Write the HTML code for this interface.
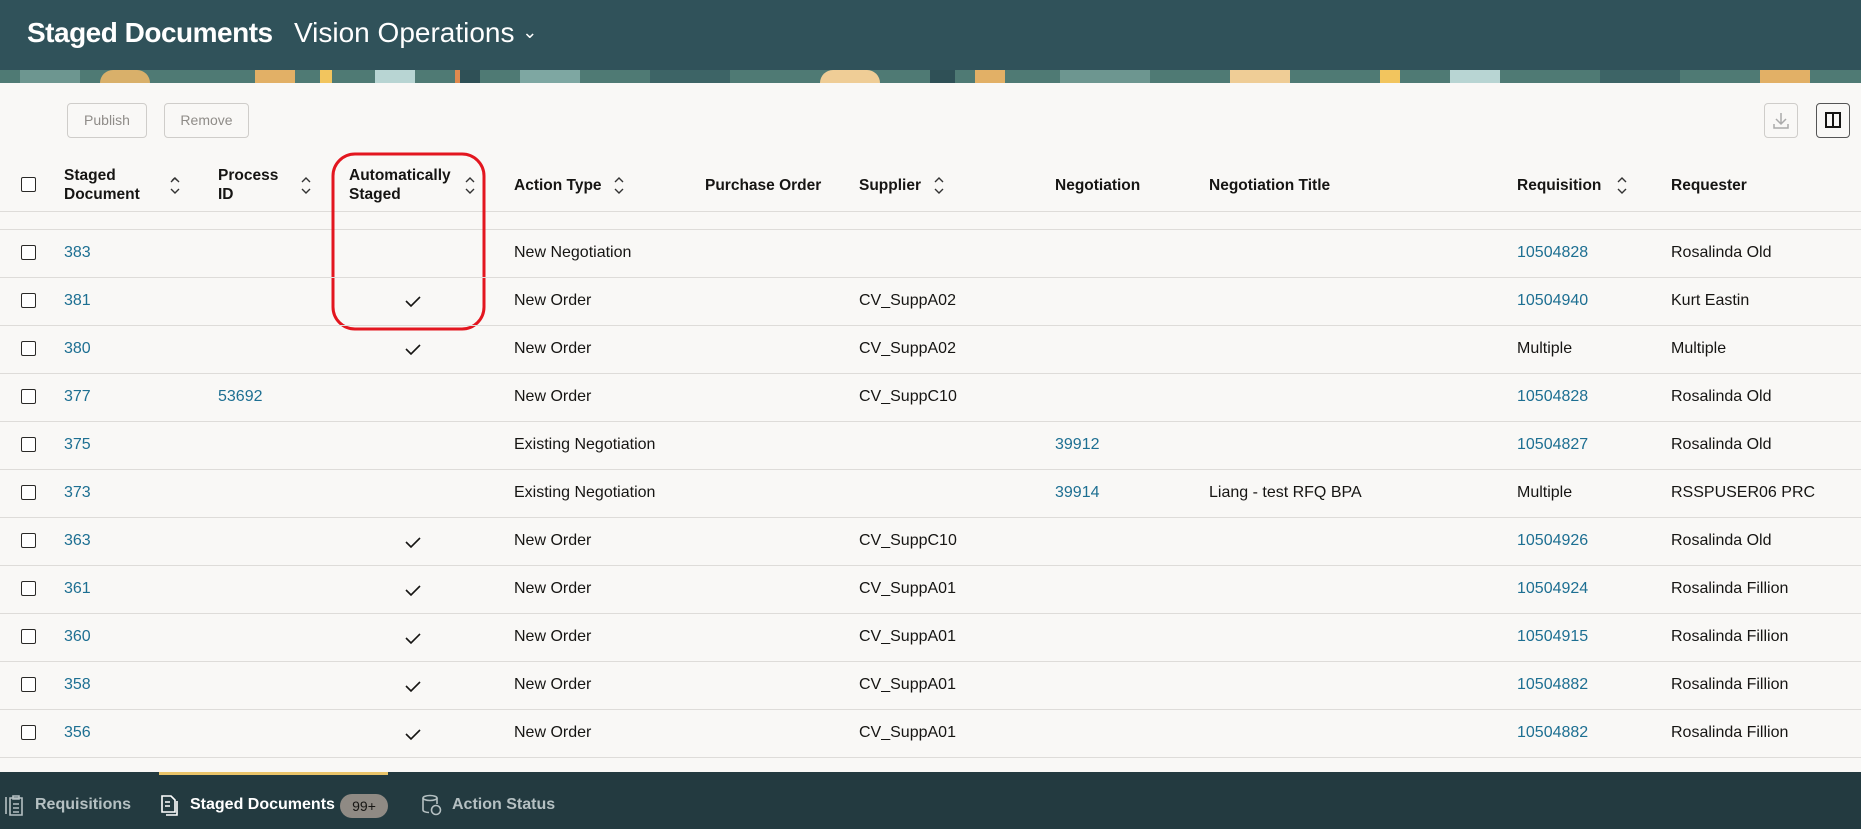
<!DOCTYPE html>
<html><head><meta charset="utf-8"><style>
*{box-sizing:border-box;margin:0;padding:0}
body{width:1861px;height:829px;overflow:hidden;background:#f9f8f6;font-family:"Liberation Sans",sans-serif;color:#161513;position:relative}
.hdr{position:absolute;left:0;top:0;width:1861px;height:70px;background:#30525a}
.strip{position:absolute;left:0;top:70px;width:1861px;height:13px;background:#4f7a74;overflow:hidden}
.strip i{position:absolute;top:0;height:13px;display:block}
.title{position:absolute;left:27px;top:17px;color:#fff;font-size:28px;font-weight:bold;letter-spacing:-0.5px}
.sub{position:absolute;left:294px;top:17px;color:#fff;font-size:28px}
.btn{position:absolute;top:103px;height:35px;border:1px solid #cfcdca;border-radius:4px;color:#8f8c88;font-size:14px;line-height:33px;text-align:center}
.ib{position:absolute;top:103px;width:34px;height:35px;border:1px solid #cfcdca;border-radius:4px}
.h{position:absolute;font-size:15.5px;font-weight:bold;line-height:19px}
.s{position:absolute;font-size:13px;color:#333}
.line{position:absolute;left:0;width:1861px;height:1px;background:#dedcd9}
.cb{position:absolute;left:21px;width:15px;height:15px;border:1.5px solid #2a2927;border-radius:2px;background:#fff}
.c{position:absolute;font-size:16px;white-space:nowrap}
.a{color:#1d6f92}
.ft{position:absolute;left:0;top:772px;width:1861px;height:57px;background:#233a40}
.ft span{position:absolute;top:24px;font-size:16px;font-weight:bold}
</style></head><body>
<div class="hdr"></div>
<div class="title">Staged Documents</div>
<div class="sub">Vision Operations <span style="font-size:18px;position:relative;top:-4px">&#8964;</span></div>
<div class="strip">
<i style="left:20px;width:60px;background:#6d9690"></i>
<i style="left:100px;width:50px;background:#d9b06a;border-radius:20px 20px 0 0"></i>
<i style="left:255px;width:40px;background:#e2b066"></i>
<i style="left:320px;width:12px;background:#f2c55e"></i>
<i style="left:375px;width:40px;background:#b8d5d3"></i>
<i style="left:455px;width:6px;background:#e08a4e"></i>
<i style="left:460px;width:20px;background:#2f5056"></i>
<i style="left:520px;width:60px;background:#7ea7a2"></i>
<i style="left:650px;width:80px;background:#3d6466"></i>
<i style="left:820px;width:60px;background:#efcd96;border-radius:20px 20px 0 0"></i>
<i style="left:930px;width:25px;background:#2f5056"></i>
<i style="left:975px;width:30px;background:#e2b066"></i>
<i style="left:1060px;width:90px;background:#6d9690"></i>
<i style="left:1230px;width:60px;background:#efcd96"></i>
<i style="left:1380px;width:20px;background:#f2c55e"></i>
<i style="left:1450px;width:50px;background:#b8d5d3"></i>
<i style="left:1600px;width:80px;background:#3d6466"></i>
<i style="left:1760px;width:50px;background:#e2b066"></i>
</div>
<div class="btn" style="left:67px;width:80px">Publish</div>
<div class="btn" style="left:164px;width:85px">Remove</div>
<div class="ib" style="left:1764px"><svg width="32" height="33" viewBox="0 0 32 33"><path d="M16 9v11M11 15l5 5 5-5M9 20v4h14v-4" stroke="#aaa" stroke-width="1.5" fill="none"/></svg></div>
<div class="ib" style="left:1816px;border-color:#555"><svg width="32" height="33" viewBox="0 0 32 33"><rect x="9" y="9" width="14" height="14" stroke="#161513" stroke-width="2" fill="none"/><path d="M16 9v14" stroke="#161513" stroke-width="2"/></svg></div>

<div class="cb" style="top:177px"></div>
<div class="h" style="left:64px;top:166px">Staged<br>Document</div><div class="s" style="left:169px;top:175px">&#8963;<br></div>
<div class="h" style="left:218px;top:166px">Process<br>ID</div>
<div class="h" style="left:349px;top:166px">Automatically<br>Staged</div>
<div class="h" style="left:514px;top:176px">Action Type</div>
<div class="h" style="left:705px;top:176px">Purchase Order</div>
<div class="h" style="left:859px;top:176px">Supplier</div>
<div class="h" style="left:1055px;top:176px">Negotiation</div>
<div class="h" style="left:1209px;top:176px">Negotiation Title</div>
<div class="h" style="left:1517px;top:176px">Requisition</div>
<div class="h" style="left:1671px;top:176px">Requester</div>
<svg style="position:absolute;left:0;top:0" width="1861" height="230">
<g stroke="#333" stroke-width="1.4" fill="none">
<path d="M171 182l4-4 4 4M171 189l4 4 4-4"/>
<path d="M302 182l4-4 4 4M302 189l4 4 4-4"/>
<path d="M466 182l4-4 4 4M466 189l4 4 4-4"/>
<path d="M615 182l4-4 4 4M615 189l4 4 4-4"/>
<path d="M935 182l4-4 4 4M935 189l4 4 4-4"/>
<path d="M1618 182l4-4 4 4M1618 189l4 4 4-4"/>
</g></svg>
<div class="line" style="top:211px"></div>
<div class="line" style="top:229px"></div>

<div style="position:absolute;top:229px;left:0">
<!-- rows -->
</div>
<div id="rows"></div>
<svg style="position:absolute;left:0;top:0" width="1861" height="829">
<g stroke="#161513" stroke-width="1.6" fill="none">
<path d="M406 301l5 5 9-9"/><path d="M406 349l5 5 9-9"/><path d="M406 542l5 5 9-9"/><path d="M406 590l5 5 9-9"/><path d="M406 638l5 5 9-9"/><path d="M406 686l5 5 9-9"/><path d="M406 734l5 5 9-9"/>
</g>
<rect x="333" y="154" width="151" height="175" rx="22" stroke="#e3161f" stroke-width="3" fill="none"/>
</svg>

<!-- row 1 y=229 -->
<div class="line" style="top:277px"></div><div class="line" style="top:325px"></div><div class="line" style="top:373px"></div><div class="line" style="top:421px"></div><div class="line" style="top:469px"></div><div class="line" style="top:517px"></div><div class="line" style="top:565px"></div><div class="line" style="top:613px"></div><div class="line" style="top:661px"></div><div class="line" style="top:709px"></div><div class="line" style="top:757px"></div>

<div class="cb" style="top:245px"></div><div class="c a" style="left:64px;top:244px">383</div><div class="c" style="left:514px;top:244px">New Negotiation</div><div class="c a" style="left:1517px;top:244px">10504828</div><div class="c" style="left:1671px;top:244px">Rosalinda Old</div>
<div class="cb" style="top:293px"></div><div class="c a" style="left:64px;top:292px">381</div><div class="c" style="left:514px;top:292px">New Order</div><div class="c" style="left:859px;top:292px">CV_SuppA02</div><div class="c a" style="left:1517px;top:292px">10504940</div><div class="c" style="left:1671px;top:292px">Kurt Eastin</div>
<div class="cb" style="top:341px"></div><div class="c a" style="left:64px;top:340px">380</div><div class="c" style="left:514px;top:340px">New Order</div><div class="c" style="left:859px;top:340px">CV_SuppA02</div><div class="c" style="left:1517px;top:340px">Multiple</div><div class="c" style="left:1671px;top:340px">Multiple</div>
<div class="cb" style="top:389px"></div><div class="c a" style="left:64px;top:388px">377</div><div class="c a" style="left:218px;top:388px">53692</div><div class="c" style="left:514px;top:388px">New Order</div><div class="c" style="left:859px;top:388px">CV_SuppC10</div><div class="c a" style="left:1517px;top:388px">10504828</div><div class="c" style="left:1671px;top:388px">Rosalinda Old</div>
<div class="cb" style="top:437px"></div><div class="c a" style="left:64px;top:436px">375</div><div class="c" style="left:514px;top:436px">Existing Negotiation</div><div class="c a" style="left:1055px;top:436px">39912</div><div class="c a" style="left:1517px;top:436px">10504827</div><div class="c" style="left:1671px;top:436px">Rosalinda Old</div>
<div class="cb" style="top:485px"></div><div class="c a" style="left:64px;top:484px">373</div><div class="c" style="left:514px;top:484px">Existing Negotiation</div><div class="c a" style="left:1055px;top:484px">39914</div><div class="c" style="left:1209px;top:484px">Liang - test RFQ BPA</div><div class="c" style="left:1517px;top:484px">Multiple</div><div class="c" style="left:1671px;top:484px">RSSPUSER06 PRC</div>
<div class="cb" style="top:533px"></div><div class="c a" style="left:64px;top:532px">363</div><div class="c" style="left:514px;top:532px">New Order</div><div class="c" style="left:859px;top:532px">CV_SuppC10</div><div class="c a" style="left:1517px;top:532px">10504926</div><div class="c" style="left:1671px;top:532px">Rosalinda Old</div>
<div class="cb" style="top:581px"></div><div class="c a" style="left:64px;top:580px">361</div><div class="c" style="left:514px;top:580px">New Order</div><div class="c" style="left:859px;top:580px">CV_SuppA01</div><div class="c a" style="left:1517px;top:580px">10504924</div><div class="c" style="left:1671px;top:580px">Rosalinda Fillion</div>
<div class="cb" style="top:629px"></div><div class="c a" style="left:64px;top:628px">360</div><div class="c" style="left:514px;top:628px">New Order</div><div class="c" style="left:859px;top:628px">CV_SuppA01</div><div class="c a" style="left:1517px;top:628px">10504915</div><div class="c" style="left:1671px;top:628px">Rosalinda Fillion</div>
<div class="cb" style="top:677px"></div><div class="c a" style="left:64px;top:676px">358</div><div class="c" style="left:514px;top:676px">New Order</div><div class="c" style="left:859px;top:676px">CV_SuppA01</div><div class="c a" style="left:1517px;top:676px">10504882</div><div class="c" style="left:1671px;top:676px">Rosalinda Fillion</div>
<div class="cb" style="top:725px"></div><div class="c a" style="left:64px;top:724px">356</div><div class="c" style="left:514px;top:724px">New Order</div><div class="c" style="left:859px;top:724px">CV_SuppA01</div><div class="c a" style="left:1517px;top:724px">10504882</div><div class="c" style="left:1671px;top:724px">Rosalinda Fillion</div>

<div class="ft">
<div style="position:absolute;left:159px;top:0;width:229px;height:3px;background:#e9c46a"></div>
<svg style="position:absolute;left:4px;top:22px" width="20" height="22"><g stroke="#b5c0c2" stroke-width="1.6" fill="none"><path d="M2 3v17M6 4h12v17H6z"/><path d="M9 2h6v3H9zM9 10h6M9 14h6M9 18h6"/></g></svg>
<span style="left:35px;color:#b5c0c2">Requisitions</span>
<svg style="position:absolute;left:160px;top:22px" width="20" height="22"><g stroke="#fff" stroke-width="1.6" fill="none"><path d="M2 2h9l4 4v12H2z"/><path d="M5 8h5M5 12h5M17 7v14H6"/></g></svg>
<span style="left:190px;color:#fff">Staged Documents</span>
<div style="position:absolute;left:340px;top:22px;width:48px;height:24px;border-radius:12px;background:#8f8a84;color:#161513;font-size:14px;line-height:24px;text-align:center">99+</div>
<svg style="position:absolute;left:421px;top:22px" width="22" height="22"><g stroke="#b5c0c2" stroke-width="1.6" fill="none"><ellipse cx="9" cy="4" rx="7" ry="2.5"/><path d="M2 4v12c0 1.5 3 2.5 6 2.5M16 4v6"/><circle cx="15" cy="16" r="4.5"/></g></svg>
<span style="left:452px;color:#b5c0c2">Action Status</span>
</div>
</body></html>
